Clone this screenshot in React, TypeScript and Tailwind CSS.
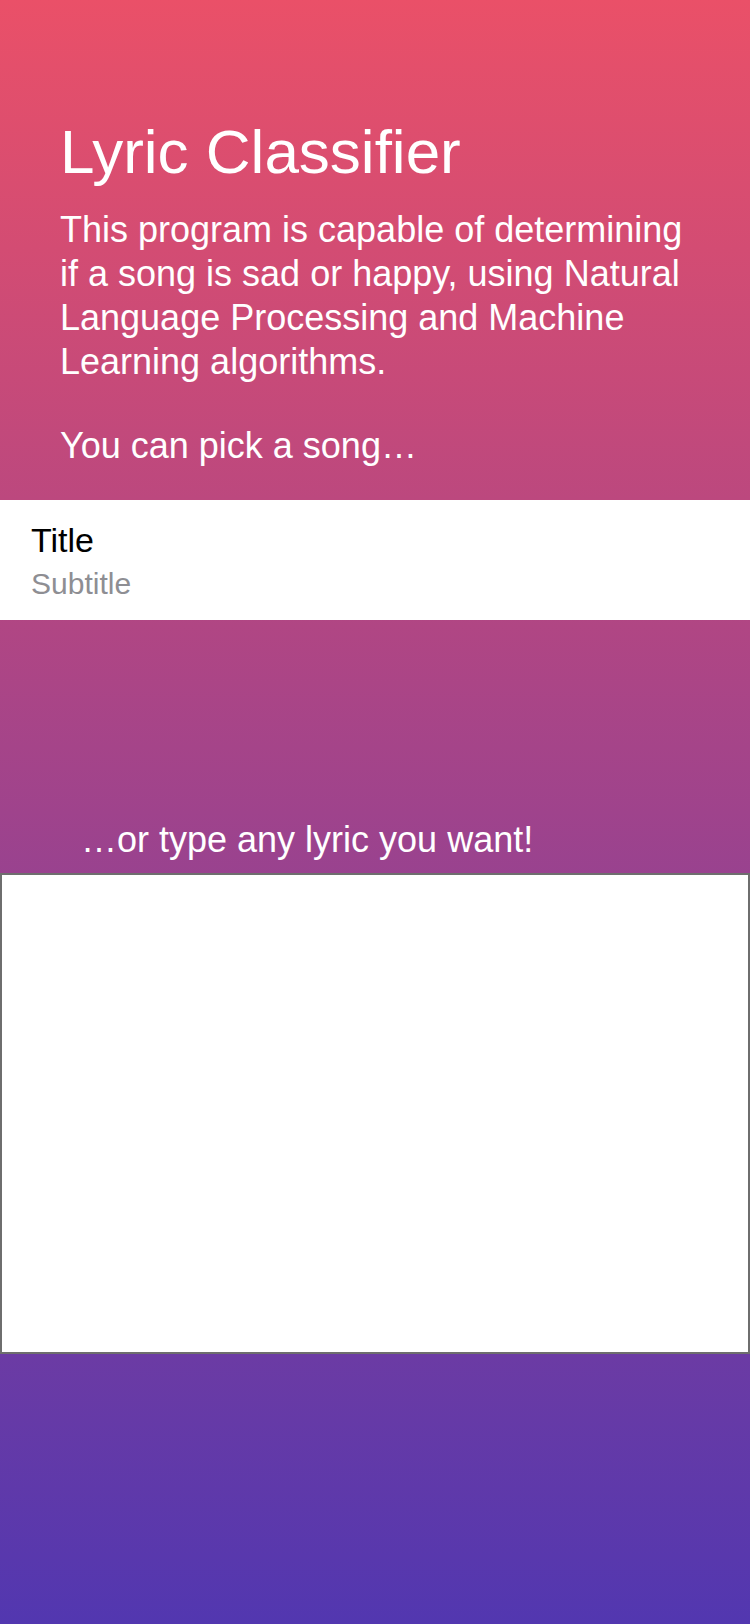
import React from "react";

export default function App() {
  return (
    <div
      className="w-[750px] min-h-[1624px] flex flex-col bg-[linear-gradient(180deg,#EA5068_0%,#9F438C_50%,#5237B0_100%)]"
      style={{ fontFamily: '"Liberation Sans", Arial, sans-serif' }}
    >
      <div className="px-[60px] pt-[116px] text-white">
        <h1 className="text-[62px] leading-[72px] font-normal">Lyric Classifier</h1>
        <p className="mt-[20px] text-[36px] leading-[44px]">
          This program is capable of determining if a song is sad or happy, using Natural Language Processing and Machine Learning algorithms.
        </p>
        <p className="mt-[40px] text-[36px] leading-[44px]">You can pick a song…</p>
      </div>

      <div className="mt-[32px] h-[120px] bg-white pl-[31px] pt-[20px]">
        <div className="text-[34px] leading-[40px] text-black">Title</div>
        <div className="mt-[6px] text-[30px] leading-[36px] text-[#8E8E93]">Subtitle</div>
      </div>

      <div className="mt-[198px] pl-[81px] text-[36px] leading-[44px] text-white">
        …or type any lyric you want!
      </div>

      <textarea
        className="mt-[11px] h-[481px] w-[750px] resize-none border-2 border-[#6E6E6E] bg-white outline-none"
        aria-label="Lyrics"
      />
    </div>
  );
}
